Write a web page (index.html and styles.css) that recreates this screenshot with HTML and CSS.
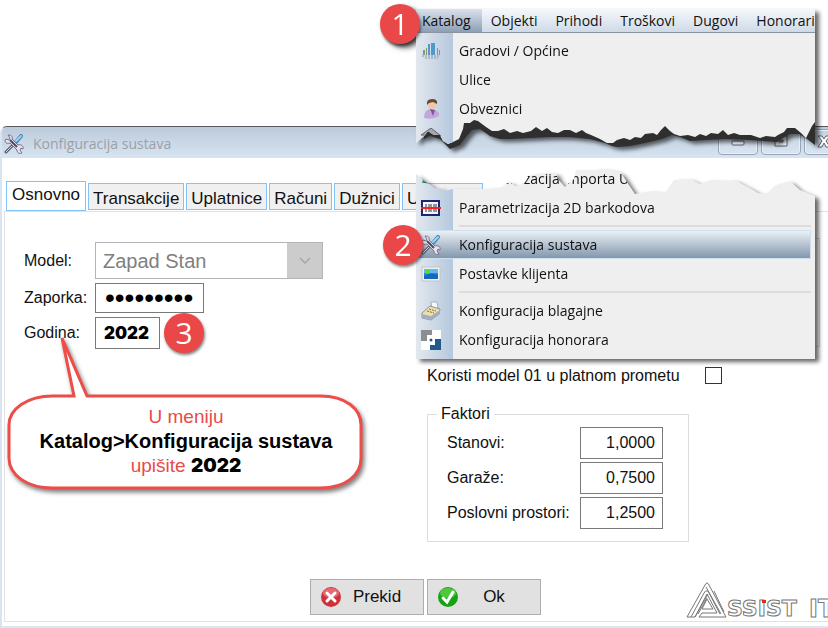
FILE: index.html
```html
<!DOCTYPE html>
<html lang="hr">
<head>
    <meta charset="UTF-8">
    <meta name="viewport" content="width=device-width, initial-scale=1.0">
    <title>Konfiguracija sustava</title>
    <link rel="stylesheet" href="styles.css">
</head>
<body>
    <!-- shared icons -->
    <svg class="sprite" aria-hidden="true">
        <symbol id="tools" viewBox="0 0 20 20">
            <path d="M2 18L9 11" stroke="#5d5a75" stroke-width="3" stroke-linecap="round"/>
            <path d="M2 18L9 11" stroke="#d9d9e6" stroke-width="1" stroke-linecap="round"/>
            <path d="M9 11L13 7" stroke="#37364a" stroke-width="2"/>
            <path d="M12 8L17 2" stroke="#4a88b4" stroke-width="4" stroke-linecap="round"/>
            <path d="M12 7L17 2" stroke="#9fd4ee" stroke-width="2" stroke-linecap="round"/>
            <path d="M4 1l2 3-1 2-3-1-1 1c0 3 2 4 5 3l7 7c0 3 2 4 5 3l-2-3 1-2 2 1c1-3-2-5-5-4L8 5c1-3-1-4-4-4z" fill="#e6e4f0" stroke="#77738f" stroke-width="1"/>
            <path d="M6 6l7 7" stroke="#4c4960" stroke-width="2"/>
        </symbol>
    </svg>

    <main class="window">
        <header class="titlebar">
            <svg class="icon"><use href="#tools"/></svg>
            <h1>Konfiguracija sustava</h1>
            <div class="window-buttons">
                <button aria-label="Minimize"><svg viewBox="0 0 16 16"><rect x="2" y="7" width="12" height="4" rx="1" fill="#fff" stroke="#5b6270"/></svg></button>
                <button aria-label="Maximize"><svg viewBox="0 0 16 16"><path d="M2 2h12v10H2zM6 6h4v2H6z" fill="#fff" fill-rule="evenodd" stroke="#5b6270"/></svg></button>
                <button aria-label="Close"><svg viewBox="0 0 16 16"><path d="M2 2h4l2 3 2-3h4l-4 5 4 6h-4L8 9l-2 4H2l4-6z" fill="#fff" stroke="#5b6270"/></svg></button>
            </div>
        </header>

        <div class="client">
            <nav class="tabs">
                <button class="tab active">Osnovno</button>
                <button class="tab">Transakcije</button>
                <button class="tab">Uplatnice</button>
                <button class="tab">Računi</button>
                <button class="tab">Dužnici</button>
                <button class="tab wide">U</button>
            </nav>

            <div class="page">
                <div class="columns">
                    <section class="account">
                        <div class="field">
                            <label for="model">Model:</label>
                            <div class="combo">
                                <select id="model" disabled><option>Zapad Stan</option></select>
                                <span class="arrow"><svg viewBox="0 0 12 8"><path d="M1 1l5 5 5-5" fill="none" stroke="#a6a6a6" stroke-width="1.5"/></svg></span>
                            </div>
                        </div>
                        <div class="field">
                            <label for="password">Zaporka:</label>
                            <input type="password" id="password" value="zaporka22">
                        </div>
                        <div class="field">
                            <label for="year">Godina:</label>
                            <input type="text" id="year" value="2022">
                            <span class="badge">3</span>
                        </div>

                        <div class="callout">
                            <svg viewBox="0 0 362 160" aria-hidden="true">
                                <path d="M57 5L69 63H48C22 63 4 76 4 92V125C4 142 22 155 48 155H315C341 155 356 142 356 125V92C356 76 341 63 315 63H82Z" fill="#fff" stroke="#ee4c48" stroke-width="3"/>
                            </svg>
                            <p>U meniju<br><b>Katalog&gt;Konfiguracija sustava</b><br>upišite <strong>2022</strong></p>
                        </div>
                    </section>

                    <section class="options">
                        <div class="group"></div>
                        <div class="check">
                            <label for="model01">Koristi model 01 u platnom prometu</label>
                            <input type="checkbox" id="model01">
                        </div>
                        <fieldset>
                            <legend>Faktori</legend>
                            <div class="factor">
                                <label for="flats">Stanovi:</label>
                                <input type="text" id="flats" value="1,0000">
                            </div>
                            <div class="factor">
                                <label for="garages">Garaže:</label>
                                <input type="text" id="garages" value="0,7500">
                            </div>
                            <div class="factor">
                                <label for="offices">Poslovni prostori:</label>
                                <input type="text" id="offices" value="1,2500">
                            </div>
                        </fieldset>
                    </section>
                </div>

                <footer class="actions">
                    <button class="action">
                        <svg viewBox="0 0 20 20"><circle cx="10" cy="10" r="10" fill="#d0313a"/><ellipse cx="10" cy="6" rx="8" ry="5" fill="#ee8288" opacity=".7"/><path d="M6 6l8 8M14 6l-8 8" stroke="#fff" stroke-width="3" stroke-linecap="round"/></svg>
                        <span>Prekid</span>
                    </button>
                    <button class="action">
                        <svg viewBox="0 0 20 20"><circle cx="10" cy="10" r="10" fill="#15a315"/><ellipse cx="10" cy="6" rx="8" ry="5" fill="#5fd04c" opacity=".8"/><path d="M5 11l4 4 6-10" fill="none" stroke="#fff" stroke-width="3" stroke-linecap="round"/></svg>
                        <span>Ok</span>
                    </button>
                    <svg class="logo" viewBox="0 0 142 38" role="img" aria-label="Assist IT">
                        <g fill="#fff" stroke="#777" stroke-width="1">
                            <path d="M1 36L19 4q2-4 4 0l17 32H13l3-4h15L21 13 9 36z"/>
                            <path d="M5 36L18 12q1-3 4-2l12 23M9 36l13-23M12 33l9-16M16 28h11l-6-10zM20 6l15 27M28 10l10 21" fill="none"/>
                            <text x="41" y="35" class="logo-small">SSIST</text>
                            <text x="123" y="36" class="logo-big">IT</text>
                        </g>
                        <rect x="76" y="19" width="4" height="3" fill="#e02a10"/>
                    </svg>
                </footer>
            </div>
        </div>
    </main>

    <!-- torn off top part of the menu -->
    <div class="cutout top">
        <svg class="tear" viewBox="0 0 399 145" aria-hidden="true">
            <path d="M8 105H399V136L390 129 383 125 374 125 367 129 361 133 334 131 309 130 289 131 274 132 264 128 256 126 246 130 229 134 214 137 202 138 196 137 189 134 174 130 154 128 134 128 114 129 94 130 84 130 74 127 64 120 56 121 50 128 44 136 34 140 28 134 24 130 14 127 8 130Z" fill="#2f2f2f"/>
        </svg>
        <div class="sheet">
            <nav class="menubar">
                <button class="open">Katalog</button>
                <button>Objekti</button>
                <button>Prihodi</button>
                <button>Troškovi</button>
                <button>Dugovi</button>
                <button>Honorari</button>
            </nav>
            <div class="menu">
                <button class="item">
                    <svg class="icon" viewBox="0 0 20 20"><path d="M7 3h2v11H7zM10 2h4v12h-4z" fill="#4f9ac7"/><path d="M2 9h2v5H2zM5 7h1v7H5zM16 7h1v7h-1zM18 9h1v5h-1z" fill="#819879"/><path d="M1 15h17M4 17h13" stroke="#8998a9" stroke-dasharray="2 1"/></svg>
                    Gradovi / Općine
                </button>
                <button class="item"><span class="icon"></span>Ulice</button>
                <button class="item">
                    <svg class="icon" viewBox="0 0 20 20"><path d="M3 19q0-8 6-9l5 1q5 2 4 6-6 4-15 2z" fill="#c3a6dc"/><path d="M9 10l3 7 2-6z" fill="#7e55a4"/><circle cx="11" cy="6" r="4" fill="#efc7a6"/><path d="M6 6q-1-6 5-6t5 5l-4-2-4 1z" fill="#654b36"/></svg>
                    Obveznici
                </button>
                <div class="item">
                    <svg class="icon" viewBox="0 0 20 20"><path d="M0 7L10 0l10 8z" fill="#a5a7aa" stroke="#62656a"/></svg>
                </div>
            </div>
        </div>
        <span class="badge">1</span>
    </div>

    <!-- torn off bottom part -->
    <div class="cutout bottom">
        <div class="shade">
            <div class="sheet">
                <div class="menu">
                    <button class="item">
                        <svg class="icon" viewBox="0 0 20 20"><path d="M0 4l12 9H2z" fill="#18c31c"/><path d="M1 13l12 2" stroke="#245d70"/></svg>
                        Parametrizacija importa U
                    </button>
                    <button class="item">
                        <svg class="icon" viewBox="0 0 20 20"><rect x="1" y="3" width="17" height="14" fill="#f7f7ff" stroke="#1c2670" stroke-width="2"/><path d="M5 6v8M8 6v8M10 6v8M13 6v8M15 6v8" stroke="#333"/><path d="M0 10h20" stroke="#f02727" stroke-width="2"/></svg>
                        Parametrizacija 2D barkodova
                    </button>
                    <hr>
                    <button class="item selected">
                        <svg class="icon"><use href="#tools"/></svg>
                        Konfiguracija sustava
                    </button>
                    <button class="item">
                        <svg class="icon" viewBox="0 0 20 20"><rect x="1" y="3" width="18" height="14" fill="#eef0f2" stroke="#bfc5cb"/><path d="M3 5h14v10H3z" fill="#2686d8"/><path d="M3 5h14v4H3z" fill="#63b8ef"/><path d="M3 12q6-4 14-1v4H3z" fill="#1767bd"/><path d="M5 6h3v4H5z" fill="#42e32a"/></svg>
                        Postavke klijenta
                    </button>
                    <hr>
                    <button class="item">
                        <svg class="icon" viewBox="0 0 20 20"><path d="M10 1h6l1 6-6 1z" fill="#f7fafc" stroke="#9fb2bf"/><path d="M1 12l8-7 10 3-1 5-8 6-9-2z" fill="#f0dfaa" stroke="#8996a0"/><path d="M1 13l9 2 9-6v4l-9 6-9-2z" fill="#a2b0bd"/><path d="M6 10l7 2M8 8l7 2" stroke="#736b58" stroke-dasharray="2 1"/></svg>
                        Konfiguracija blagajne
                    </button>
                    <button class="item">
                        <svg class="icon" viewBox="0 0 20 20"><path d="M0 0h20v20H0z" fill="#fff"/><path d="M0 0h11v5H6v6H0z" fill="#8c8f91"/><path d="M20 9v11H9v-5h5V9z" fill="#23588d"/><circle cx="10" cy="10" r="1.5" fill="#23588d"/></svg>
                        Konfiguracija honorara
                    </button>
                </div>
            </div>
        </div>
        <span class="badge">2</span>
    </div>
</body>
</html>
```

FILE: styles.css
```css
* {
    box-sizing: border-box;
}
body {
    display: flex;
    flex-direction: column;
    position: relative;
    margin: 0;
    padding-top: 126px;
    min-height: 100vh;
    overflow-x: hidden;
    font-family: "Liberation Sans", Arial, sans-serif;
    font-size: 16px;
    color: #111;
    background-color: #fff;
}
button, input, select {
    font-family: inherit;
    font-size: inherit;
    color: inherit;
    margin: 0;
    border-radius: 0;
}
.sprite {
    position: absolute;
    width: 0;
    height: 0;
}
.icon {
    flex: none;
    width: 20px;
    height: 20px;
}

/* Window */
.window {
    flex: 1;
    display: flex;
    flex-direction: column;
    border-top: 1px solid #555a60;
    border-left: 2px solid #d8e4f1;
    border-bottom: 2px solid #dce6f2;
    border-top-left-radius: 7px;
}
.titlebar {
    display: flex;
    align-items: center;
    gap: 9px;
    height: 31px;
    padding: 2px 0 0 2px;
    overflow: hidden;
    background: linear-gradient(#bccbdb, #d7e4f1);
    border-top-left-radius: 5px;
}
.titlebar h1 {
    flex: 1;
    margin: 0;
    font-family: "Open Sans", sans-serif;
    font-size: 14px;
    font-weight: normal;
    color: #9aa0a8;
}
.window-buttons {
    display: flex;
    gap: 3px;
    align-self: flex-start;
    margin-right: -16px;
}
.window-buttons button {
    width: 40px;
    height: 26px;
    padding: 4px 0 0;
    border: 1px solid #97a5b8;
    border-radius: 0 0 4px 4px;
    background: linear-gradient(#c4d1e0, #d9e5f2);
    box-shadow: inset 0 0 0 1px #e9f0f8;
}
.window-buttons svg {
    width: 16px;
    height: 16px;
}
.client {
    flex: 1;
    display: flex;
    flex-direction: column;
    padding: 23px 0 4px 2px;
}

/* Tabs */
.tabs {
    display: flex;
    align-items: flex-end;
    gap: 2px;
    padding-left: 2px;
    height: 30px;
    font-size: 17px;
}
.tab {
    height: 27px;
    padding: 4px 4px 0;
    margin-bottom: 1px;
    border: 1px solid #7fc3f8;
    background-color: #f0f0f0;
    line-height: 20px;
    white-space: nowrap;
}
.tab.active {
    height: 30px;
    margin-bottom: 0;
    padding: 0 5px 2px;
    background-color: #fff;
}
.tab.wide {
    width: 81px;
    text-align: left;
}
.page {
    flex: 1;
    display: flex;
    flex-direction: column;
    border: solid #e2e2e2;
    border-width: 1px 0 1px 1px;
}
.columns {
    display: flex;
    gap: 60px;
}

/* Left side */
.account {
    position: relative;
    width: 362px;
    padding: 30px 0 0 19px;
    display: flex;
    flex-direction: column;
    gap: 4px;
}
.field {
    display: flex;
    align-items: center;
}
.field label {
    width: 71px;
    white-space: nowrap;
}
.combo {
    position: relative;
    width: 228px;
}
.combo select {
    display: block;
    width: 100%;
    height: 37px;
    padding: 0 7px;
    appearance: none;
    border: 1px solid #b4b4b8;
    background-color: #fff;
    font-size: 20px;
    color: #808080;
    opacity: 1;
}
.combo .arrow {
    position: absolute;
    top: 1px;
    right: 1px;
    bottom: 1px;
    width: 35px;
    display: flex;
    align-items: center;
    justify-content: center;
    background-color: #ccc;
}
.arrow svg {
    width: 12px;
    height: 8px;
}
.field input {
    border: 1px solid #7a7a7a;
    background-color: #fff;
}
#password {
    width: 109px;
    height: 30px;
    padding: 0 9px;
    font-size: 28px;
    color: #000;
}
#year {
    width: 65px;
    height: 32px;
    padding: 0 8px;
    font-family: Inter, sans-serif;
    font-size: 17px;
    font-weight: 900;
    color: #000;
}
.badge {
    display: flex;
    align-items: center;
    justify-content: center;
    width: 40px;
    height: 40px;
    border-radius: 50%;
    background-color: #ea4848;
    box-shadow: 1px 2px 3px rgba(0, 0, 0, 0.5);
    font-family: "Open Sans", sans-serif;
    font-size: 30px;
    line-height: 40px;
    color: #fff;
}
.field .badge {
    margin: -4px 0 -4px 4px;
}
.callout {
    position: absolute;
    top: 121px;
    left: 0;
    width: 362px;
    height: 160px;
    pointer-events: none;
}
.callout svg {
    display: block;
    width: 362px;
    height: 160px;
    filter: drop-shadow(2px 3px 2px rgba(0, 0, 0, 0.5));
}
.callout p {
    position: absolute;
    top: 72px;
    left: 0;
    width: 100%;
    margin: 0;
    font-size: 19px;
    line-height: 24px;
    text-align: center;
    color: #e94b48;
}
.callout b, .callout strong {
    color: #000;
}
.callout b {
    font-size: 20px;
}
.callout strong {
    font-family: Inter, sans-serif;
    font-weight: 900;
}

/* Right side */
.options {
    flex: 1;
    padding-top: 26px;
}
.group {
    height: 109px;
    margin-right: 8px;
    border: 1px solid #dcdcdc;
}
.check {
    display: flex;
    align-items: center;
    gap: 25px;
    margin-top: 20px;
    height: 17px;
    white-space: nowrap;
}
.check input {
    appearance: none;
    width: 17px;
    height: 17px;
    margin: 0;
    border: 1px solid #333;
    background-color: #fff;
}
fieldset {
    width: 262px;
    margin: 21px 0 0;
    padding: 4px 25px 12px 19px;
    border: 1px solid #dcdcdc;
    display: flex;
    flex-direction: column;
    gap: 3px;
}
legend {
    margin-left: -10px;
    padding: 0 4px;
    line-height: 18px;
}
.factor {
    display: flex;
    align-items: center;
    justify-content: space-between;
    white-space: nowrap;
}
.factor input {
    width: 83px;
    height: 32px;
    padding: 0 7px;
    border: 1px solid #7a7a7a;
    text-align: right;
}

/* Buttons */
.actions {
    display: flex;
    justify-content: center;
    align-items: center;
    gap: 3px;
    position: relative;
    margin-top: auto;
    padding: 0 0 6px 18px;
}
.action {
    display: flex;
    align-items: center;
    width: 114px;
    height: 36px;
    padding: 0 10px;
    border: 1px solid #adadad;
    background-color: #e1e1e1;
    font-size: 17px;
}
.action svg {
    width: 20px;
    height: 20px;
}
.action span {
    flex: 1;
}
.logo {
    position: absolute;
    right: 0;
    bottom: 2px;
    width: 142px;
    height: 38px;
}
.logo text {
    font-family: "DejaVu Sans", sans-serif;
    font-weight: bold;
}
.logo-small {
    font-size: 22px;
}
.logo-big {
    font-size: 24px;
}

/* Menu cutouts lying over the window */
.cutout {
    position: absolute;
    left: 416px;
    width: 399px;
    font-family: "Open Sans", sans-serif;
    font-size: 14px;
}
.cutout.top {
    top: 9px;
    filter: drop-shadow(4px 3px 2px rgba(0, 0, 0, 0.6));
}
.cutout.bottom {
    top: 164px;
}
.shade {
    filter: drop-shadow(4px 3px 2px rgba(0, 0, 0, 0.6));
}
.tear {
    position: absolute;
    top: 0;
    left: 0;
    width: 399px;
    height: 145px;
}
.sheet {
    position: relative;
    overflow: hidden;
    background-color: #efefef;
}
.top .sheet {
    height: 145px;
    clip-path: polygon(0 0, 100% 0, 399px 113px, 396px 117px, 390px 129px, 385px 124px, 379px 119px, 371px 119px, 368px 123px, 362px 126px, 359px 128px, 350px 127px, 344px 129px, 335px 126px, 324px 126px, 318px 124px, 312px 126px, 307px 121px, 302px 125px, 295px 124px, 290px 127px, 284px 125px, 279px 128px, 272px 126px, 264px 127px, 258px 125px, 254px 122px, 249px 117px, 245px 121px, 241px 126px, 237px 124px, 229px 125px, 225px 129px, 219px 128px, 214px 131px, 208px 129px, 201px 131px, 197px 134px, 191px 134px, 184px 130px, 175px 126px, 170px 124px, 166px 121px, 160px 124px, 154px 121px, 148px 121px, 142px 124px, 136px 123px, 131px 119px, 126px 122px, 120px 118px, 115px 122px, 107px 124px, 101px 122px, 94px 124px, 88px 120px, 82px 122px, 76px 122px, 70px 118px, 66px 115px, 62px 112px, 58px 111px, 54px 114px, 48px 114px, 47px 120px, 43px 130px, 37px 133px, 32px 135px, 27px 132px, 24px 126px, 18px 126px, 12px 122px, 8px 127px, 0 134px);
}
.bottom .sheet {
    clip-path: polygon(0 10px, 6px 15px, 17px 23px, 20px 25px, 24px 24px, 29px 27px, 37px 25px, 70px 25px, 84px 24px, 90px 20px, 94px 18px, 99px 22px, 105px 21px, 110px 17px, 112px 12px, 120px 10px, 140px 9px, 142px 15px, 149px 23px, 154px 18px, 158px 15px, 160px 6px, 178px 7px, 184px 5px, 195px 6px, 205px 9px, 211px 18px, 219px 30px, 235px 27px, 249px 29px, 258px 16px, 274px 15px, 284px 20px, 294px 16px, 309px 17px, 319px 16px, 326px 20px, 334px 24px, 342px 29px, 350px 30px, 360px 21px, 367px 19px, 374px 17px, 384px 26px, 399px 32px, 100% 100%, 0 100%);
}
.menubar {
    display: flex;
    height: 24px;
    border-bottom: 1px solid #8b93a0;
    background: linear-gradient(#f4f8fc, #cfdae7);
}
.menubar button {
    flex: none;
    padding: 0 9px;
    border: none;
    background: none;
    line-height: 20px;
}
.menubar .open {
    padding: 0 11px 0 6px;
    background: linear-gradient(#d9e2ec, #8c9fb4);
}
.menu {
    padding-bottom: 5px;
    background: linear-gradient(to right, #e3e8ee, #b5c8de) no-repeat left / 37px 100%;
}
.top .menu {
    padding-top: 3px;
}
.item {
    display: flex;
    align-items: center;
    gap: 18px;
    width: 395px;
    height: 29px;
    padding: 0 0 0 5px;
    border: none;
    background: none;
    text-align: left;
    white-space: nowrap;
}
.item.selected {
    border: solid #d0dfee;
    border-width: 1px 1px 1px 0;
    background: linear-gradient(#eaf0f6, #8397ad);
}
.menu hr {
    height: 2px;
    margin: 3px 4px 3px 43px;
    border: none;
    background-color: #dcdcdc;
}
.cutout .badge {
    position: absolute;
    left: -36px;
    top: -5px;
}
.cutout.bottom .badge {
    left: -33px;
    top: 61px;
}
```
